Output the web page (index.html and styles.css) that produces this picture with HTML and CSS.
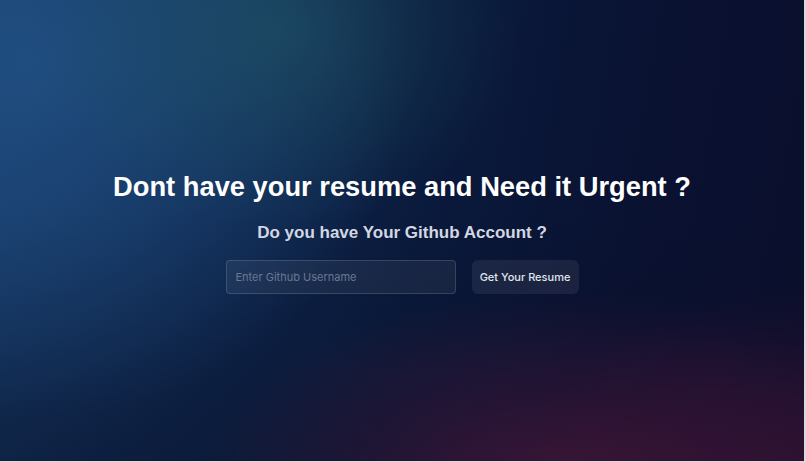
FILE: index.html
```html
<!DOCTYPE html>
<html>
<head>
<meta charset="utf-8">
<link rel="stylesheet" href="styles.css">
</head>
<body>
<main class="page">
  <h1 class="title">Dont have your resume and Need it Urgent ?</h1>
  <h2 class="subtitle">Do you have Your Github Account ?</h2>
  <form class="form">
    <input class="input" type="text" placeholder="Enter Github Username">
    <button class="btn" type="button">Get Your Resume</button>
  </form>
</main>
</body>
</html>
```
FILE: styles.css
```css
html, body {
  margin: 0;
  padding: 0;
  width: 806px;
  height: 462px;
  overflow: hidden;
  background: #d9d9de;
}
.page {
  width: 804px;
  height: 461px;
  display: flex;
  flex-direction: column;
  align-items: center;
  justify-content: center;
  box-sizing: border-box;
  padding-top: 4px;
  background:
    radial-gradient(ellipse 240px 200px at 280px 30px, rgba(34, 92, 102, 0.5), transparent),
    radial-gradient(ellipse 380px 360px at 30px 60px, rgba(34, 82, 134, 0.8), transparent),
    radial-gradient(ellipse 360px 190px at 560px 480px, rgba(80, 22, 58, 0.7), transparent),
    radial-gradient(ellipse 280px 170px at 820px 450px, rgba(62, 18, 54, 0.55), transparent),
    linear-gradient(to bottom, transparent 45%, rgba(8, 14, 36, 0.45) 100%),
    linear-gradient(100deg, #163a68 0%, #0f2850 28%, #0a1a3c 52%, #0a1232 75%, #0a0e2c 100%);
}
.title {
  margin: 0;
  font-family: "Liberation Sans", Arial, sans-serif;
  font-weight: 700;
  font-size: 27.3px;
  line-height: 32px;
  color: #ffffff;
}
.subtitle {
  margin: 19px 0 0;
  font-family: "Liberation Sans", Arial, sans-serif;
  font-weight: 700;
  font-size: 17px;
  line-height: 22px;
  color: #d3d7e2;
}
.form {
  margin: 16px 0 0;
  display: flex;
  gap: 16px;
}
.input {
  width: 230px;
  height: 34px;
  box-sizing: border-box;
  padding: 0 9px;
  border: 1px solid rgba(255, 255, 255, 0.14);
  border-radius: 4px;
  background: rgba(255, 255, 255, 0.06);
  font-family: Inter, "Noto Sans", sans-serif;
  font-size: 11px;
  color: #e0e4ec;
  outline: none;
}
.input::placeholder {
  color: #6a7893;
}
.btn {
  width: 107px;
  height: 34px;
  border: none;
  border-radius: 6px;
  background: rgba(255, 255, 255, 0.07);
  font-family: Inter, "Noto Sans", sans-serif;
  font-weight: 500;
  font-size: 11px;
  color: #e2e6ee;
  padding: 0;
  cursor: pointer;
}
```
